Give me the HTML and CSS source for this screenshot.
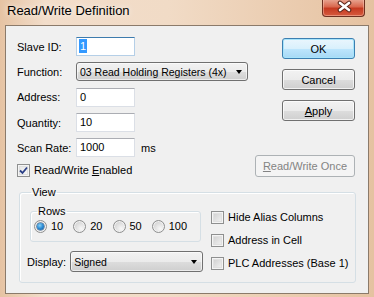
FILE: index.html
```html
<!DOCTYPE html>
<html>
<head>
    <title>Read/Write Definition</title>
    <link rel="stylesheet" href="styles.css">
</head>
<body>
    <div class="window">
        <div class="titlebar">
            <span class="title">Read/Write Definition</span>
            <span class="close">
                <svg width="43" height="17" viewBox="0 0 43 17">
                    <path d="M17 4 L26 11 M17 11 L26 4" stroke="#5a2418" stroke-width="4.6" stroke-linecap="round"/>
                    <path d="M17 4 L26 11 M17 11 L26 4" stroke="#ffffff" stroke-width="2.6" stroke-linecap="round"/>
                </svg>
            </span>
        </div>
        <div class="client">
            <div class="top">
                <div class="form">
                    <label>Slave ID:</label>
                    <div class="field focus"><span class="selected">1</span></div>

                    <label>Function:</label>
                    <div class="combo wide"><span>03 Read Holding Registers (4x)</span><span class="arrow"></span></div>

                    <label>Address:</label>
                    <div class="field">0</div>

                    <label>Quantity:</label>
                    <div class="field">10</div>

                    <label>Scan Rate:</label>
                    <div class="unit-row"><div class="field">1000</div><span class="unit">ms</span></div>

                    <div class="check-row span">
                        <span class="check checked">
                            <svg width="9" height="9" viewBox="0 0 9 9"><path d="M1 4.5 L3.5 7 L8 1.5" fill="none" stroke="#2b3f87" stroke-width="1.8"/></svg>
                        </span>
                        <span>Read/Write <u>E</u>nabled</span>
                    </div>
                </div>
                <div class="buttons">
                    <button class="btn default">OK</button>
                    <button class="btn">Cancel</button>
                    <button class="btn"><u>A</u>pply</button>
                    <button class="btn disabled once"><u>R</u>ead/Write Once</button>
                </div>
            </div>

            <fieldset class="group view">
                <legend>View</legend>
                <div class="view-grid">
                    <div class="view-left">
                        <fieldset class="group rows">
                            <legend>Rows</legend>
                            <div class="radio-row">
                                <span class="radio-item"><span class="radio on"></span>10</span>
                                <span class="radio-item"><span class="radio"></span>20</span>
                                <span class="radio-item"><span class="radio"></span>50</span>
                                <span class="radio-item"><span class="radio"></span>100</span>
                            </div>
                        </fieldset>
                        <div class="display-row">
                            <label>Display:</label>
                            <div class="combo display"><span>Signed</span><span class="arrow"></span></div>
                        </div>
                    </div>
                    <div class="view-right">
                        <div class="check-row"><span class="check"></span><span>Hide Alias Columns</span></div>
                        <div class="check-row"><span class="check"></span><span>Address in Cell</span></div>
                        <div class="check-row"><span class="check"></span><span>PLC Addresses (Base 1)</span></div>
                    </div>
                </div>
            </fieldset>
        </div>
    </div>
</body>
</html>
```

FILE: styles.css
```css
body {
    margin: 0;
    font-family: "Liberation Sans", Arial, sans-serif;
    font-size: 11px;
    color: #000;
}
.window {
    width: 374px;
    height: 297px;
    box-sizing: border-box;
    padding: 0 5px 3px 5px;
    display: flex;
    flex-direction: column;
    background: linear-gradient(to right, #e6c3a3, #f2ddca 12%, #f1dbc6 45%, #eacbae 80%, #e5c2a1);
}
.titlebar {
    height: 25px;
    display: flex;
    align-items: flex-start;
    margin: 0 -5px;
    padding: 0 9px 0 7px;
    flex-shrink: 0;
}
.title {
    font-size: 13px;
    line-height: 16px;
    margin-top: 3px;
    text-shadow: 0 0 6px #fff;
}
.close {
    margin-left: auto;
    margin-top: -1px;
    width: 43px;
    height: 18px;
    box-sizing: border-box;
    border: 1px solid #6e3021;
    border-top: none;
    border-radius: 0 0 4px 4px;
    background: linear-gradient(#e9a996, #d9684f 45%, #c53a21 55%, #d65a3e);
    box-shadow: inset 0 0 0 1px rgba(255, 210, 190, 0.45);
}
.close svg {
    display: block;
}
.client {
    flex: 1;
    border: 1px solid #8b7a6a;
    background: #f0f0f0;
    display: flex;
    flex-direction: column;
}
.top {
    display: flex;
    justify-content: space-between;
    padding: 11px 13px 0 11px;
}
.form {
    display: grid;
    grid-template-columns: 59px auto;
    row-gap: 6px;
    align-items: center;
}
.form .span {
    grid-column: 1 / 3;
}
.field {
    width: 59px;
    height: 19px;
    box-sizing: border-box;
    border: 1px solid #dbdfe6;
    border-top-color: #abadb3;
    background: #fff;
    padding: 0 3px;
    line-height: 17px;
}
.field.focus {
    border-color: #b5cfe7;
    border-top-color: #3d7bad;
    padding-left: 2px;
}
.selected {
    background: #3399ff;
    color: #fff;
    padding: 1px 1px;
}
.unit-row {
    display: flex;
    align-items: center;
}
.unit {
    margin-left: 6px;
}
.combo {
    height: 19px;
    box-sizing: border-box;
    border: 1px solid #707070;
    border-radius: 3px;
    background: linear-gradient(#f2f2f2, #ebebeb 50%, #dddddd 51%, #cfcfcf);
    display: flex;
    align-items: center;
    padding: 0 0 0 3px;
    font-size: 10.5px;
    box-shadow: inset 0 0 0 1px rgba(255, 255, 255, 0.6);
}
.combo.wide {
    width: 172px;
}
.combo.display {
    width: 136px;
    height: 21px;
}
.arrow {
    margin-left: auto;
    margin-right: 5px;
    width: 0;
    height: 0;
    border-left: 3.5px solid transparent;
    border-right: 3.5px solid transparent;
    border-top: 4px solid #000;
}
.check-row {
    display: flex;
    align-items: center;
    gap: 4px;
    line-height: 13px;
}
.check {
    width: 13px;
    height: 13px;
    box-sizing: border-box;
    border: 1px solid #8e8f8f;
    background: linear-gradient(135deg, #cbcbcb, #f6f6f6);
    box-shadow: inset 0 0 0 1px #f4f4f4, inset 0 0 0 2px #e0e0e0;
    display: flex;
    align-items: center;
    justify-content: center;
    flex-shrink: 0;
}
.check.checked {
    background: linear-gradient(135deg, #e2e2e2, #fbfbfb);
}
.check svg {
    display: block;
}
.buttons {
    display: flex;
    flex-direction: column;
    align-items: flex-end;
    gap: 10px;
    padding-top: 1px;
}
.btn {
    width: 73px;
    height: 21px;
    font-family: inherit;
    font-size: 11px;
    color: #000;
    padding: 0;
    border: 1px solid #707070;
    border-radius: 3px;
    background: linear-gradient(#f2f2f2, #ebebeb 50%, #dddddd 51%, #cfcfcf);
    box-shadow: inset 0 0 0 1px rgba(255, 255, 255, 0.7);
}
.btn.default {
    border-color: #3c7fb1;
    background: linear-gradient(#eaf6fd, #d9f0fc 50%, #bee6fd 51%, #a7d9f5);
    box-shadow: inset 0 0 0 1px #a7e4fb;
}
.btn.once {
    width: 100px;
    height: 22px;
    margin-top: 24px;
}
.btn.disabled {
    color: #838383;
    border-color: #adb2b5;
    background: #f4f4f4;
    box-shadow: none;
}
.group {
    margin: 0;
    border: 1px solid #d5dfe5;
    border-radius: 3px;
    box-shadow: inset 1px 1px 0 #fff;
}
.group legend {
    line-height: 13px;
    padding: 0 1px;
}
.view {
    margin: 9px 12px 9px 13px;
    padding: 6px 6px 10px 7px;
}
.view > legend {
    margin-left: 4px;
}
.view-grid {
    display: grid;
    grid-template-columns: 176px auto;
    column-gap: 8px;
}
.rows {
    margin-left: 3px;
    width: 171px;
    box-sizing: border-box;
    padding: 2px 0 8px 3px;
}
.rows > legend {
    margin-left: 3px;
}
.radio-row {
    display: flex;
    gap: 10px;
}
.radio-item {
    display: flex;
    align-items: center;
    gap: 4px;
    line-height: 13px;
}
.radio {
    width: 13px;
    height: 13px;
    box-sizing: border-box;
    border-radius: 50%;
    border: 1px solid #8e8f8f;
    background: radial-gradient(circle at 65% 70%, #f8f8f8, #d0d0d0 80%);
    box-shadow: inset 0 0 0 1px #f2f2f2;
    display: flex;
    align-items: center;
    justify-content: center;
}
.radio.on::after {
    content: "";
    width: 7px;
    height: 7px;
    border-radius: 50%;
    background: radial-gradient(circle at 40% 35%, #8ad2f5, #2a8ad4 50%, #14508d);
    box-shadow: 0 0 0 0.5px #1d4a7a;
}
.display-row {
    display: flex;
    align-items: center;
    gap: 4px;
    margin-top: 9px;
}
.view-right {
    display: flex;
    flex-direction: column;
    gap: 10px;
    padding-top: 6px;
}
```
